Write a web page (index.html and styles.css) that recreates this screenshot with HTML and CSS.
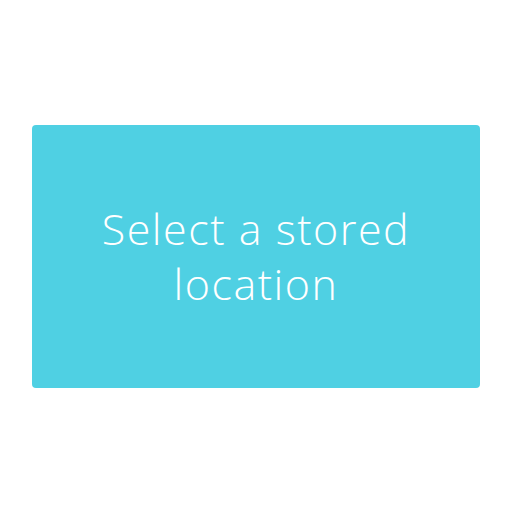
FILE: index.html
```html
<!DOCTYPE html>
<html>
<head>
<meta charset="utf-8">
<link rel="stylesheet" href="styles.css">
</head>
<body>
<div class="page">
  <div class="card">
    <div class="label">Select a stored<br>location</div>
  </div>
</div>
</body>
</html>
```

FILE: styles.css
```css
html, body {
  margin: 0;
  padding: 0;
  background: #ffffff;
}
.page {
  width: 512px;
  height: 512px;
  display: flex;
  align-items: center;
  justify-content: center;
}
.card {
  width: 448px;
  height: 263px;
  background: #4fd0e3;
  border-radius: 4px;
  display: flex;
  align-items: center;
  justify-content: center;
}
.label {
  font-family: "Open Sans", sans-serif;
  font-weight: 300;
  font-size: 43px;
  line-height: 55px;
  letter-spacing: 1.5px;
  color: #ffffff;
  text-align: center;
}
```
